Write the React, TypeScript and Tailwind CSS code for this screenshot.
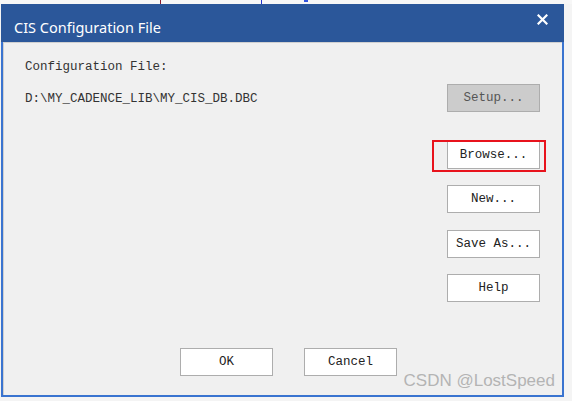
import type { ReactNode } from "react";

const mono = { fontFamily: '"Liberation Mono", "DejaVu Sans Mono", monospace' };

function DlgButton({ children, disabled, className = "" }: { children: ReactNode; disabled?: boolean; className?: string }) {
  return (
    <button
      style={mono}
      className={`w-[93px] h-[28px] border text-[12.5px] flex items-center justify-center ${
        disabled ? "bg-[#cccccc] border-[#adadad] text-[#555]" : "bg-white border-[#adadad] text-[#222]"
      } ${className}`}
    >
      {children}
    </button>
  );
}

export default function App() {
  return (
    <div className="w-[572px] h-[401px] bg-[#f4f4f4] relative overflow-hidden">
      {/* strip of the page behind the dialog */}
      <div className="h-[4px] relative bg-[#f7f7f7]">
        <div className="absolute left-[160px] top-0 w-[1px] h-[4px] bg-[#8b1a2b]" />
        <div className="absolute left-[261px] top-0 w-[1px] h-[4px] bg-[#2233cc]" />
        <div className="absolute left-[304px] top-0 w-[4px] h-[2px] bg-[#3355dd]" />
      </div>

      <div className="ml-[1px] w-[563px] h-[393px] border-2 border-t-0 border-[#3a74d0] bg-[#f0f0f0] flex flex-col">
        <div className="h-[38px] bg-[#2b579a] flex items-center justify-between pl-[13px] pr-[16px] -mx-[2px]">
          <span className="text-white text-[14.5px] mt-[9px]" style={{ fontFamily: '"Noto Sans", "Open Sans", sans-serif' }}>
            CIS Configuration File
          </span>
          <svg width="11" height="11" viewBox="0 0 11 11" className="mb-[7px]">
            <path d="M1.5 1.5 L9.5 9.5 M9.5 1.5 L1.5 9.5" stroke="white" strokeWidth="2.2" strokeLinecap="square" />
          </svg>
        </div>

        <div className="flex-1 border-l border-t border-[#d0d0d0] flex flex-col relative">
          <div className="flex">
            <div className="flex-1 pl-[21px] pt-[16px] text-[12.5px] text-[#333]" style={mono}>
              <div className="h-[16px] leading-[16px]">Configuration File:</div>
              <div className="h-[16px] leading-[16px] mt-[16px]">D:\MY_CADENCE_LIB\MY_CIS_DB.DBC</div>
            </div>
            <div className="w-[93px] mr-[22px] pt-[41px] flex flex-col">
              <DlgButton disabled>Setup...</DlgButton>
              <div className="relative mt-[29px]">
                <DlgButton>Browse...</DlgButton>
                <div className="absolute -left-[15px] -top-[1px] w-[114px] h-[32px] border-2 border-[#e8131c] pointer-events-none" />
              </div>
              <DlgButton className="mt-[16px]">New...</DlgButton>
              <DlgButton className="mt-[17px]">Save As...</DlgButton>
              <DlgButton className="mt-[16px]">Help</DlgButton>
            </div>
          </div>

          <div className="flex pl-[176px] gap-[31px] mt-[46px]">
            <DlgButton>OK</DlgButton>
            <DlgButton>Cancel</DlgButton>
          </div>

          <div
            className="absolute right-[7px] bottom-[2px] text-[17px] text-[#b4b4b4]"
            style={{ fontFamily: '"Liberation Sans", Arial, sans-serif' }}
          >
            CSDN @LostSpeed
          </div>
        </div>
      </div>
    </div>
  );
}
